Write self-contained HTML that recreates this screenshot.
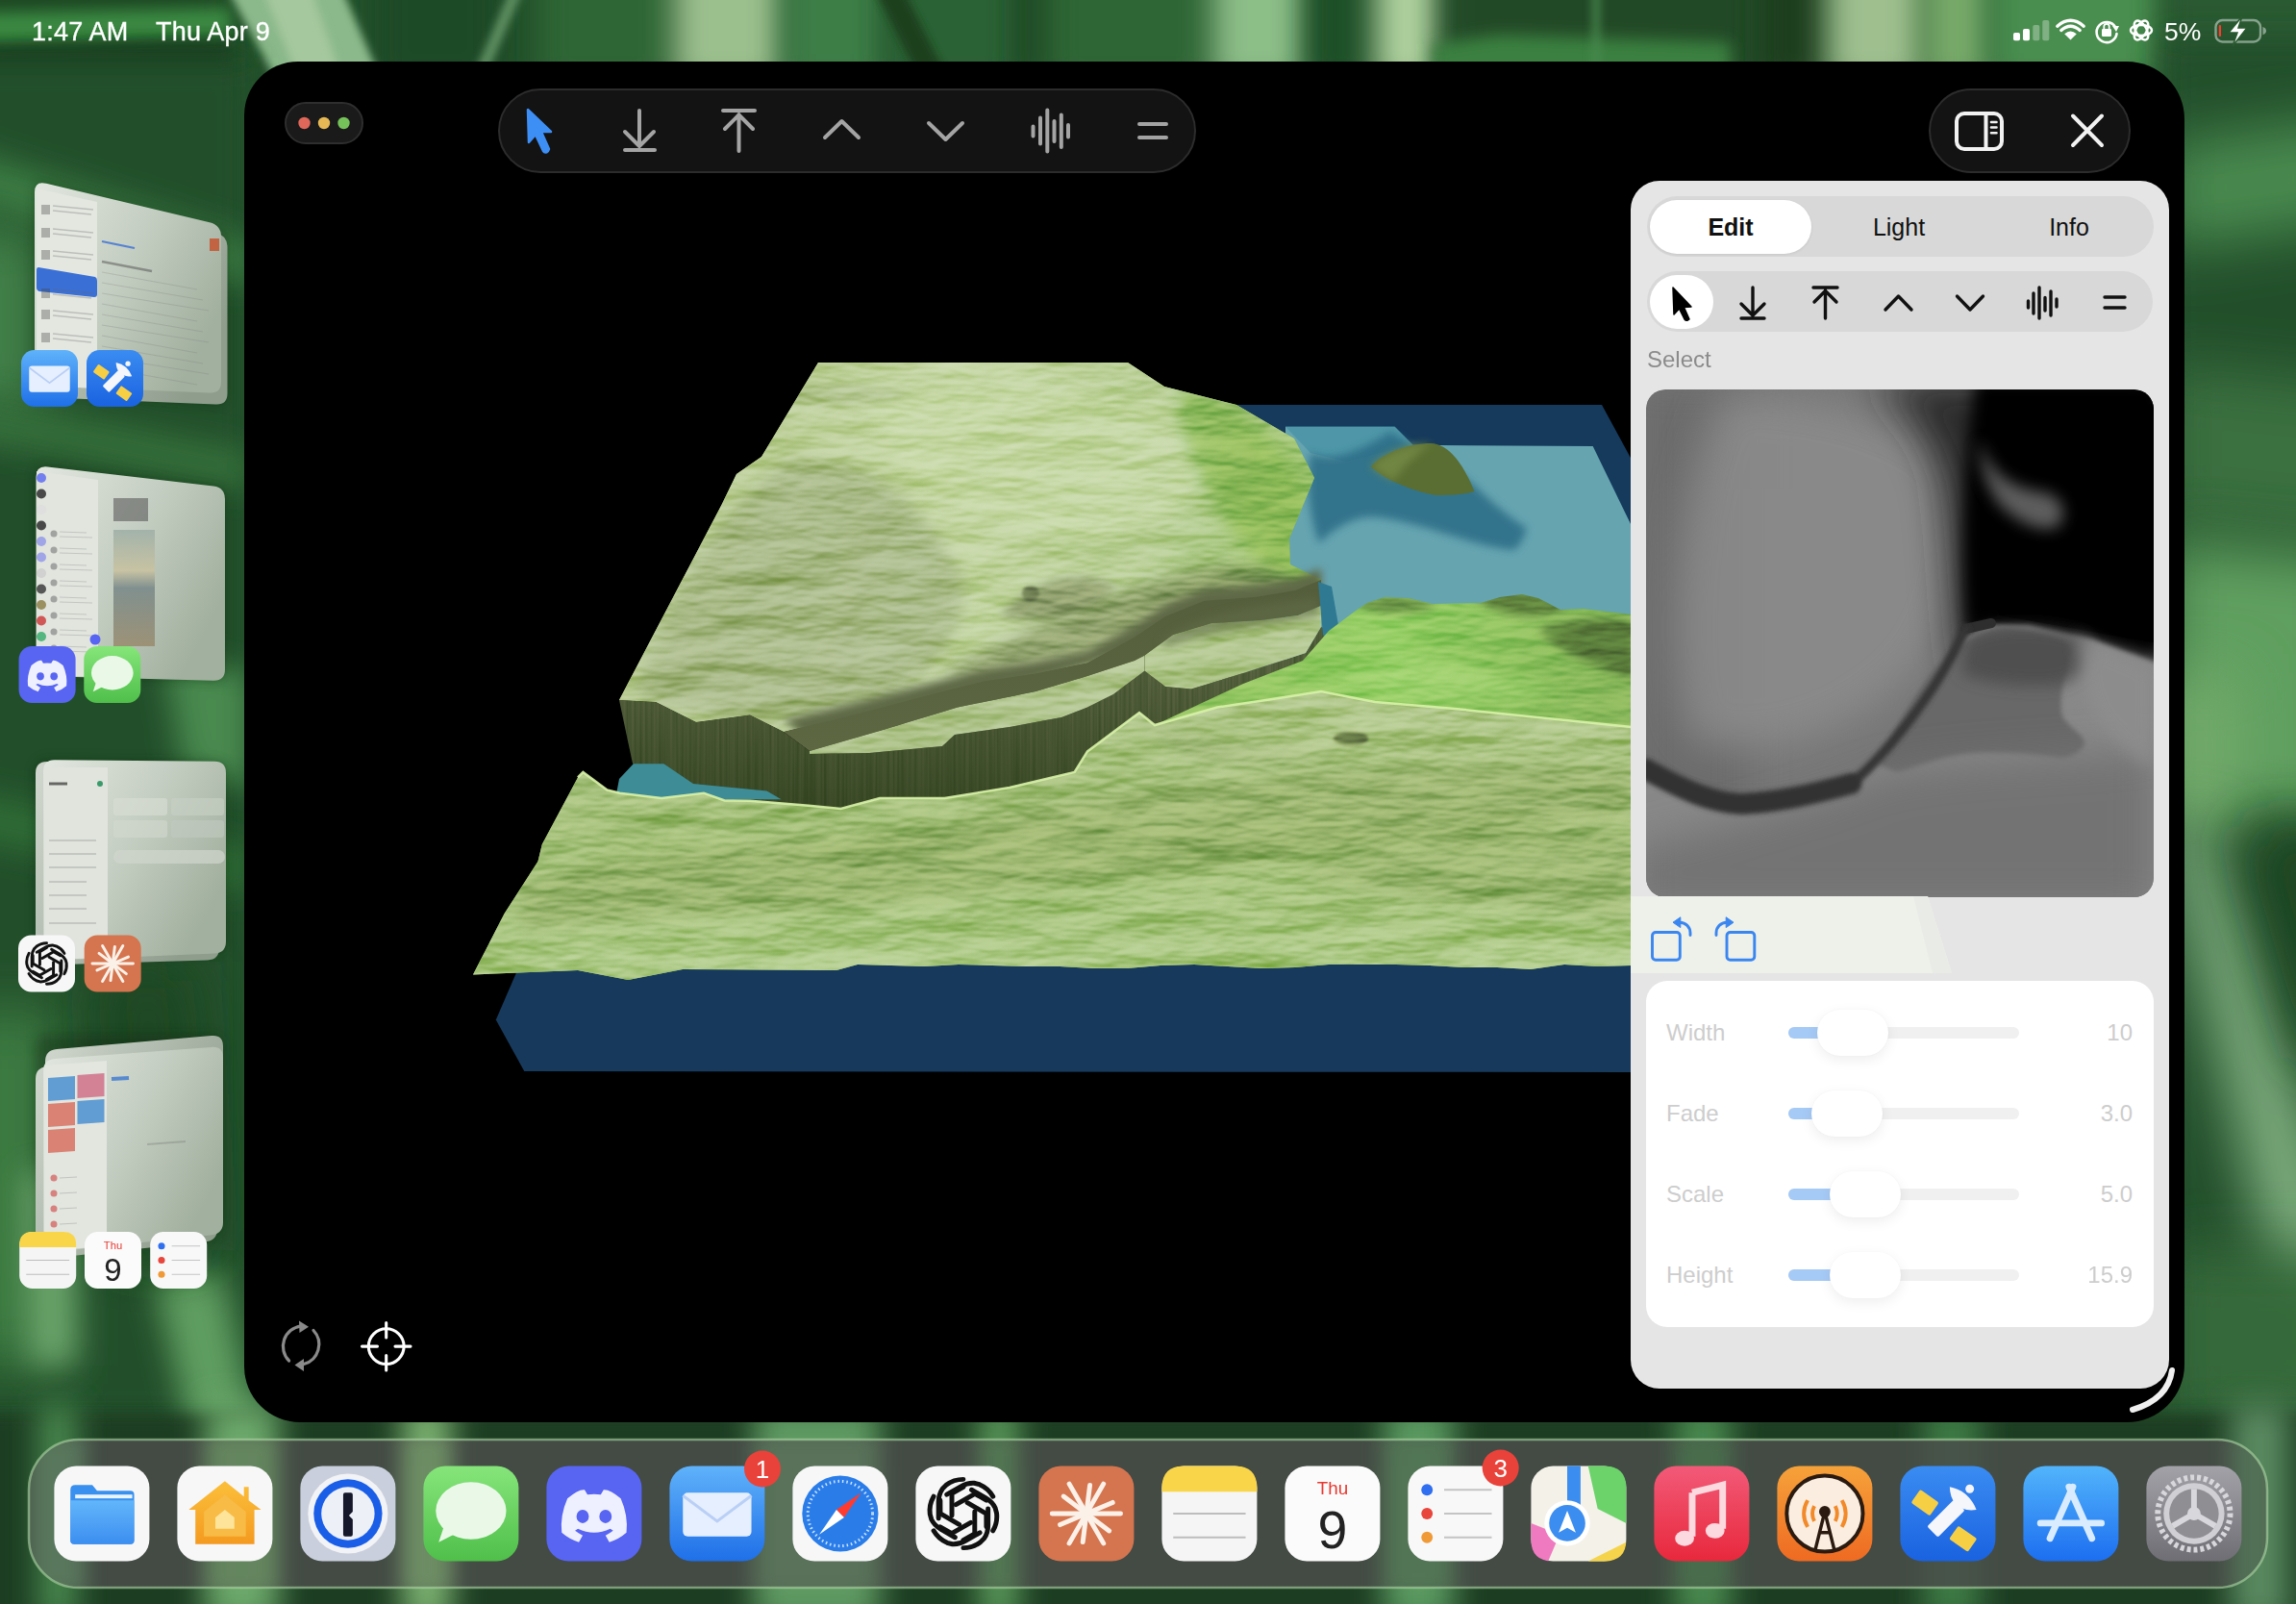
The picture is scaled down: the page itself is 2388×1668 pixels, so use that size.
<!DOCTYPE html>
<html><head><meta charset="utf-8">
<style>
*{margin:0;padding:0;box-sizing:border-box}
html,body{width:2388px;height:1668px;overflow:hidden;background:#1e4526;font-family:"Liberation Sans",sans-serif}
.abs{position:absolute}
#wall{position:absolute;left:0;top:0;width:2388px;height:1668px}
#win{position:absolute;left:254px;top:64px;width:2018px;height:1415px;background:#000;border-radius:56px 60px 60px 58px;overflow:hidden}
.pill{position:absolute;background:#131313;border:2px solid #2a2a2a;border-radius:44px}
.status{position:absolute;color:#fff;font-size:27px;top:18px;letter-spacing:0.2px;-webkit-text-stroke:0.35px #fff}
.seg{top:20px;height:56px;line-height:56px;text-align:center;font-size:25px;color:#111}
.slab{font-size:24px;line-height:30px;color:#cdcdcd}
#panel{position:absolute;left:1696px;top:188px;width:560px;height:1256px;background:#e5e5e5;border-radius:30px}
</style></head><body>
<!--WALL-->
<svg id="wall" width="2388" height="1668" viewBox="0 0 2388 1668">
<defs><filter id="b30" filterUnits="userSpaceOnUse" x="-200" y="-200" width="2788" height="2068"><feGaussianBlur stdDeviation="30"/></filter><filter id="b16" filterUnits="userSpaceOnUse" x="-200" y="-200" width="2788" height="2068"><feGaussianBlur stdDeviation="16"/></filter><filter id="b8" filterUnits="userSpaceOnUse" x="-200" y="-200" width="2788" height="2068"><feGaussianBlur stdDeviation="8"/></filter><filter id="b4" filterUnits="userSpaceOnUse" x="-200" y="-200" width="2788" height="2068"><feGaussianBlur stdDeviation="4"/></filter></defs>
<rect width="2388" height="1668" fill="#22502a"/>
<rect x="-50" y="-40" width="290" height="130" fill="#1c4621" filter="url(#b16)"/>
<rect x="390" y="-40" width="130" height="130" fill="#1e4a25" filter="url(#b16)"/>
<rect x="560" y="-40" width="140" height="130" fill="#2d6636" filter="url(#b16)"/>
<rect x="700" y="-40" width="115" height="130" fill="#9cbf8e" filter="url(#b16)"/>
<rect x="815" y="-40" width="105" height="130" fill="#3c7e46" filter="url(#b16)"/>
<rect x="920" y="-40" width="140" height="130" fill="#2c6234" filter="url(#b16)"/>
<rect x="1060" y="-40" width="30" height="130" fill="#1d4621" filter="url(#b16)"/>
<rect x="1090" y="-40" width="170" height="130" fill="#2d6636" filter="url(#b16)"/>
<rect x="1260" y="-40" width="100" height="130" fill="#8cbe88" filter="url(#b16)"/>
<rect x="1360" y="-40" width="70" height="130" fill="#1f5026" filter="url(#b16)"/>
<rect x="1430" y="-40" width="70" height="130" fill="#aed09e" filter="url(#b16)"/>
<rect x="1500" y="-40" width="330" height="130" fill="#214a27" filter="url(#b16)"/>
<rect x="1830" y="-40" width="70" height="130" fill="#1b3d1f" filter="url(#b16)"/>
<rect x="1900" y="-40" width="100" height="130" fill="#9fbf8f" filter="url(#b16)"/>
<rect x="2000" y="-40" width="70" height="130" fill="#78aa6a" filter="url(#b16)"/>
<rect x="2070" y="-40" width="180" height="130" fill="#4a8e50" filter="url(#b16)"/>
<rect x="2250" y="-40" width="200" height="130" fill="#2a5a30" filter="url(#b16)"/>
<polygon points="-50,14 240,8 240,40 -50,48" fill="#3a8a42" filter="url(#b8)"/>
<polygon points="-50,50 240,42 240,90 -50,90" fill="#163a1c" filter="url(#b8)"/>
<polygon points="232,-20 352,-20 395,80 285,80" fill="#8bb98b" filter="url(#b4)"/>
<polygon points="270,-20 320,-20 355,80 310,80" fill="#a6c89e" filter="url(#b4)"/>
<polygon points="535,-20 548,-20 505,80 492,80" fill="#5f9062" filter="url(#b4)"/>
<polygon points="905,-20 935,-20 985,80 955,80" fill="#1a401f" filter="url(#b4)"/>
<polygon points="1490,46 1560,36 1800,44 1800,90 1490,90" fill="#3a8040" filter="url(#b8)"/>
<rect x="1655" y="-20" width="10" height="100" fill="#4a8a50" filter="url(#b4)" opacity="0.7"/>

<rect x="2250" y="40" width="200" height="1460" fill="#22502a" filter="url(#b16)"/>
<polygon points="2250,150 2450,120 2450,230 2250,260" fill="#4a8a50" filter="url(#b30)"/>
<polygon points="2250,380 2450,400 2450,560 2250,540" fill="#3a7040" filter="url(#b30)"/>
<polygon points="2250,560 2450,580 2450,860 2250,840" fill="#5f9f5f" filter="url(#b30)"/>
<polygon points="2250,700 2330,700 2330,860 2250,860" fill="#72aa6a" filter="url(#b30)"/>
<polygon points="2250,860 2300,860 2450,1320 2450,1420 2390,1420" fill="#86b686" filter="url(#b30)"/>
<polygon points="2330,860 2450,860 2450,1100 2400,1100" fill="#1e4424" filter="url(#b30)"/>
<polygon points="2250,1300 2450,1300 2450,1480 2250,1480" fill="#35693b" filter="url(#b30)"/>
<polygon points="-50,60 260,60 260,1480 -50,1480" fill="#21502a" filter="url(#b16)"/>
<polygon points="-50,150 260,250 260,300 -50,200" fill="#3a7a42" filter="url(#b16)"/>
<polygon points="-50,230 40,240 40,430 -50,430" fill="#45854b" filter="url(#b30)"/>
<polygon points="-50,410 260,470 260,510 -50,450" fill="#356f3b" filter="url(#b16)"/>
<polygon points="170,680 260,700 260,820 190,800" fill="#4a8a50" filter="url(#b16)"/>
<polygon points="-50,820 260,880 260,930 -50,870" fill="#2f6a36" filter="url(#b16)"/>
<polygon points="-50,1050 60,1050 60,1420 -50,1420" fill="#3c7c42" filter="url(#b30)"/>
<polygon points="25,1220 75,1220 80,1420 30,1420" fill="#6aa46a" filter="url(#b16)"/>
<polygon points="160,1330 230,1320 270,1500 200,1500" fill="#5f9e60" filter="url(#b16)"/>
<polygon points="100,1000 200,1000 220,1300 120,1300" fill="#1d4622" filter="url(#b30)"/>
<rect x="-50" y="1470" width="2500" height="250" fill="#1c3c23" filter="url(#b8)"/>
<rect x="40" y="1460" width="40" height="230" fill="#4a8a50" filter="url(#b16)"/>
<rect x="213" y="1460" width="77" height="230" fill="#6ca86a" filter="url(#b16)"/>
<rect x="418" y="1460" width="52" height="230" fill="#7ab070" filter="url(#b16)"/>
<rect x="784" y="1460" width="131" height="230" fill="#5f9a62" filter="url(#b16)"/>
<rect x="1019" y="1460" width="40" height="230" fill="#5b9b5c" filter="url(#b16)"/>
<rect x="1439" y="1460" width="73" height="230" fill="#5a9a60" filter="url(#b16)"/>
<rect x="1742" y="1460" width="58" height="230" fill="#4a8a50" filter="url(#b16)"/>
<rect x="2000" y="1460" width="60" height="230" fill="#3d7a45" filter="url(#b16)"/>
<rect x="2320" y="1460" width="60" height="230" fill="#5a8a60" filter="url(#b16)"/>
</svg>

<!--STATUS-->
<div class="status" style="left:33px">1:47 AM</div>
<div class="status" style="left:162px">Thu Apr 9</div>

<svg class="abs" style="left:2080px;top:10px" width="300" height="45" viewBox="2080 10 300 45">
<rect x="2094" y="34" width="7" height="8.2" rx="1.8" fill="#fff"/>
<rect x="2104" y="30" width="7" height="12.2" rx="1.8" fill="#fff"/>
<rect x="2114.3" y="26" width="7" height="16.2" rx="1.8" fill="#fff" opacity="0.3"/>
<rect x="2124.3" y="21" width="7" height="21.2" rx="1.8" fill="#fff" opacity="0.3"/>
<path d="M2153.5,41.5 L2147.2,35.2 Q2153.5,30 2159.8,35.2 Z" fill="#fff"/>
<path d="M2143.8,31.5 Q2153.5,23 2163.2,31.5" fill="none" stroke="#fff" stroke-width="3.4" stroke-linecap="round"/>
<path d="M2139.8,27.2 Q2153.5,15.5 2167.2,27.2" fill="none" stroke="#fff" stroke-width="3.4" stroke-linecap="round"/>
<path d="M2200,28 A10.5,10.5 0 1 0 2201.5,35" fill="none" stroke="#fff" stroke-width="2.6" stroke-linecap="round"/>
<polygon points="2197,27 2204,27 2201,33" fill="#fff"/>
<rect x="2186" y="30" width="10" height="8" rx="1.2" fill="#fff"/>
<path d="M2188.3,30 L2188.3,27.5 A2.7,2.7 0 0 1 2193.7,27.5 L2193.7,30" fill="none" stroke="#fff" stroke-width="1.8"/>
<g fill="none" stroke="#fff" stroke-width="2.4">
<ellipse cx="2227" cy="31.5" rx="11" ry="5.5" transform="rotate(0 2227 31.5)"/>
<ellipse cx="2227" cy="31.5" rx="11" ry="5.5" transform="rotate(60 2227 31.5)"/>
<ellipse cx="2227" cy="31.5" rx="11" ry="5.5" transform="rotate(120 2227 31.5)"/>
</g>
<text x="2251" y="41.5" font-family="Liberation Sans" font-size="26.5" fill="#fff">5%</text>
<rect x="2304.5" y="21" width="46.5" height="22.5" rx="7" fill="none" stroke="#fff" stroke-opacity="0.45" stroke-width="2.4"/>
<path d="M2353.5,28 Q2357,29 2357,32 Q2357,35 2353.5,36 Z" fill="#fff" fill-opacity="0.45"/>
<rect x="2307.8" y="26" width="2.2" height="12" rx="1" fill="#ff3b30"/>
<path d="M2332,17 L2318,34 L2327,34 L2322,48 L2337,29 L2328,29 Z" fill="#fff" stroke="#2a5a30" stroke-width="1.5"/>
</svg>
<!--STAGE-->
<svg class="abs" style="left:0;top:0" width="260" height="1400" viewBox="0 0 260 1400">
<defs>
<linearGradient id="smg" x1="0" y1="0" x2="1" y2="0.6"><stop offset="0" stop-color="#e2e7df"/><stop offset="0.5" stop-color="#c6cfc3"/><stop offset="1" stop-color="#a2b09f"/></linearGradient>
<linearGradient id="smg2" x1="0" y1="0" x2="1" y2="0.6"><stop offset="0" stop-color="#d2d8cf"/><stop offset="1" stop-color="#8f9d8d"/></linearGradient>
<filter id="smb" x="-30%" y="-30%" width="160%" height="160%"><feGaussianBlur stdDeviation="6"/></filter>
<filter id="smt" x="-10%" y="-10%" width="120%" height="120%"><feGaussianBlur stdDeviation="0.6"/></filter>
</defs>
<path d="M48,191.12 L224,236.88 Q236,240 236,252 L236,409 Q236,421 224,420.04 L48,405.96 Q36,405 36,393 L36,200 Q36,188 48,191.12 Z" fill="#0a200e" opacity="0.35" filter="url(#smb)"/>
<path d="M49,485.4010152284264 L222,505.5989847715736 Q234,507 234,519 L234,696 Q234,708 222,707.6954314720812 L49,703.3045685279188 Q37,703 37,691 L37,496 Q37,484 49,485.4010152284264 Z" fill="#0a200e" opacity="0.35" filter="url(#smb)"/>
<path d="M49,790.1212121212121 L223,791.8787878787879 Q235,792 235,804 L235,979 Q235,991 223,991.4848484848485 L49,998.5151515151515 Q37,999 37,987 L37,802 Q37,790 49,790.1212121212121 Z" fill="#0a200e" opacity="0.35" filter="url(#smb)"/>
<path d="M49,1076.0 L220,1076.0 Q232,1076 232,1088 L232,1271 Q232,1283 220,1284.2307692307693 L49,1301.7692307692307 Q37,1303 37,1291 L37,1088 Q37,1076 49,1076.0 Z" fill="#0a200e" opacity="0.35" filter="url(#smb)"/>
<path d="M52,202.74809160305344 L224.5,242.25190839694656 Q236.5,245 236.5,257 L236.5,409 Q236.5,421 224.5,420.51145038167937 L52,413.48854961832063 Q40,413 40,401 L40,212 Q40,200 52,202.74809160305344 Z" fill="url(#smg2)" />
<path d="M48,190.84536082474227 L218,231.15463917525773 Q230,234 230,246 L230,397 Q230,409 218,408.50515463917526 L48,401.49484536082474 Q36,401 36,389 L36,200 Q36,188 48,190.84536082474227 Z" fill="url(#smg)" />
<polygon points="38,196 101,210 101,404 38,401" fill="#e3e7e0"/>
<path d="M40,278 L99,288 Q101,289 101,292 L101,306 Q101,309 98,309 L41,303 Q38,302 38,299 L38,281 Q38,278 40,278 Z" fill="#3a6fd6"/>
<rect x="43" y="213" width="9" height="10" fill="#444" opacity="0.35"/>
<path d="M55,214 L97,218 M55,219 L95,223" stroke="#666" stroke-width="1.3" opacity="0.3"/>
<rect x="43" y="237" width="9" height="10" fill="#444" opacity="0.35"/>
<path d="M55,238 L97,242 M55,243 L95,247" stroke="#666" stroke-width="1.3" opacity="0.3"/>
<rect x="43" y="260" width="9" height="10" fill="#444" opacity="0.35"/>
<path d="M55,261 L97,265 M55,266 L95,270" stroke="#666" stroke-width="1.3" opacity="0.3"/>
<rect x="43" y="300" width="9" height="10" fill="#444" opacity="0.35"/>
<path d="M55,301 L97,305 M55,306 L95,310" stroke="#666" stroke-width="1.3" opacity="0.3"/>
<rect x="43" y="322" width="9" height="10" fill="#444" opacity="0.35"/>
<path d="M55,323 L97,327 M55,328 L95,332" stroke="#666" stroke-width="1.3" opacity="0.3"/>
<rect x="43" y="346" width="9" height="10" fill="#444" opacity="0.35"/>
<path d="M55,347 L97,351 M55,352 L95,356" stroke="#666" stroke-width="1.3" opacity="0.3"/>
<path d="M106,251 L140,258" stroke="#3a6fd6" stroke-width="2.2" opacity="0.8"/>
<path d="M106,272 L158,282" stroke="#444" stroke-width="2.5" opacity="0.45"/>
<rect x="218" y="248" width="10" height="13" fill="#c65530" opacity="0.85"/>
<path d="M106,283 L205,301" stroke="#777" stroke-width="1.2" opacity="0.25"/>
<path d="M106,294 L211,312" stroke="#777" stroke-width="1.2" opacity="0.25"/>
<path d="M106,305 L217,323" stroke="#777" stroke-width="1.2" opacity="0.25"/>
<path d="M106,316 L205,334" stroke="#777" stroke-width="1.2" opacity="0.25"/>
<path d="M106,327 L211,345" stroke="#777" stroke-width="1.2" opacity="0.25"/>
<path d="M106,338 L217,356" stroke="#777" stroke-width="1.2" opacity="0.25"/>
<path d="M106,349 L205,367" stroke="#777" stroke-width="1.2" opacity="0.25"/>
<path d="M106,360 L211,378" stroke="#777" stroke-width="1.2" opacity="0.25"/>
<path d="M106,371 L217,389" stroke="#777" stroke-width="1.2" opacity="0.25"/>
<path d="M106,382 L205,400" stroke="#777" stroke-width="1.2" opacity="0.25"/>
<path d="M49.5,485.40458015267177 L222,505.59541984732823 Q234,507 234,519 L234,696 Q234,708 222,707.6946564885496 L49.5,703.3053435114504 Q37.5,703 37.5,691 L37.5,496 Q37.5,484 49.5,485.40458015267177 Z" fill="url(#smg)" />
<polygon points="38,490 102,499 102,704 38,702" fill="#e1e5de"/>
<circle cx="43" cy="497.0" r="5" fill="#5865f2" opacity="0.8"/>
<circle cx="43" cy="513.5" r="5" fill="#222" opacity="0.8"/>
<circle cx="43" cy="530.0" r="5" fill="#ddd" opacity="0.8"/>
<circle cx="43" cy="546.5" r="5" fill="#222" opacity="0.8"/>
<circle cx="43" cy="563.0" r="5" fill="#8f95e8" opacity="0.8"/>
<circle cx="43" cy="579.5" r="5" fill="#8f95e8" opacity="0.8"/>
<circle cx="43" cy="596.0" r="5" fill="#ccc" opacity="0.8"/>
<circle cx="43" cy="612.5" r="5" fill="#333" opacity="0.8"/>
<circle cx="43" cy="629.0" r="5" fill="#8a7a40" opacity="0.8"/>
<circle cx="43" cy="645.5" r="5" fill="#c33" opacity="0.8"/>
<circle cx="43" cy="662.0" r="5" fill="#3a6" opacity="0.8"/>
<circle cx="56" cy="555" r="3.5" fill="#777" opacity="0.6"/><path d="M62,553 L90,554 M62,558 L96,559" stroke="#777" stroke-width="1.2" opacity="0.28"/>
<circle cx="56" cy="572" r="3.5" fill="#777" opacity="0.6"/><path d="M62,570 L90,571 M62,575 L96,576" stroke="#777" stroke-width="1.2" opacity="0.28"/>
<circle cx="56" cy="589" r="3.5" fill="#777" opacity="0.6"/><path d="M62,587 L90,588 M62,592 L96,593" stroke="#777" stroke-width="1.2" opacity="0.28"/>
<circle cx="56" cy="606" r="3.5" fill="#777" opacity="0.6"/><path d="M62,604 L90,605 M62,609 L96,610" stroke="#777" stroke-width="1.2" opacity="0.28"/>
<circle cx="56" cy="623" r="3.5" fill="#777" opacity="0.6"/><path d="M62,621 L90,622 M62,626 L96,627" stroke="#777" stroke-width="1.2" opacity="0.28"/>
<circle cx="56" cy="640" r="3.5" fill="#777" opacity="0.6"/><path d="M62,638 L90,639 M62,643 L96,644" stroke="#777" stroke-width="1.2" opacity="0.28"/>
<circle cx="56" cy="657" r="3.5" fill="#777" opacity="0.6"/><path d="M62,655 L90,656 M62,660 L96,661" stroke="#777" stroke-width="1.2" opacity="0.28"/>
<circle cx="56" cy="674" r="3.5" fill="#777" opacity="0.6"/><path d="M62,672 L90,673 M62,677 L96,678" stroke="#777" stroke-width="1.2" opacity="0.28"/>
<rect x="118" y="518" width="36" height="24" fill="#5a5a5a" opacity="0.6"/>
<defs><linearGradient id="beach" x1="0" y1="0" x2="0" y2="1"><stop offset="0" stop-color="#9fb0a8"/><stop offset="0.35" stop-color="#c8c2a0"/><stop offset="0.5" stop-color="#7a8a8a"/><stop offset="1" stop-color="#9a8d70"/></linearGradient></defs>
<rect x="118" y="551" width="43" height="121" fill="url(#beach)" opacity="0.9"/>
<circle cx="99" cy="665" r="5.5" fill="#5865f2"/>
<path d="M49,792.0 L216,792.0 Q228,792 228,804 L228,986 Q228,998 216,998.3769633507853 L49,1003.6230366492147 Q37,1004 37,992 L37,804 Q37,792 49,792.0 Z" fill="url(#smg2)" />
<path d="M57,790.1263157894737 L223,791.8736842105263 Q235,792 235,804 L235,979 Q235,991 223,991.5052631578948 L57,998.4947368421052 Q45,999 45,987 L45,802 Q45,790 57,790.1263157894737 Z" fill="url(#smg)" />
<polygon points="46,798 112,798 112,996 46,998" fill="#e0e4dd"/>
<path d="M51,815 L70,815" stroke="#333" stroke-width="3" opacity="0.7"/><circle cx="104" cy="815" r="3" fill="#3a9a6a"/>
<path d="M51,874 L100,874" stroke="#666" stroke-width="1.3" opacity="0.3"/>
<path d="M51,888 L100,888" stroke="#666" stroke-width="1.3" opacity="0.3"/>
<path d="M51,902 L100,902" stroke="#666" stroke-width="1.3" opacity="0.3"/>
<path d="M51,917 L90,917" stroke="#666" stroke-width="1.3" opacity="0.3"/>
<path d="M51,931 L90,931" stroke="#666" stroke-width="1.3" opacity="0.3"/>
<path d="M51,945 L90,945" stroke="#666" stroke-width="1.3" opacity="0.3"/>
<path d="M51,960 L100,960" stroke="#666" stroke-width="1.3" opacity="0.3"/>
<rect x="118" y="830" width="56" height="18" rx="3" fill="#d8ddd4" opacity="0.6"/><rect x="178" y="830" width="55" height="18" rx="3" fill="#c8d0c5" opacity="0.6"/>
<rect x="118" y="853" width="56" height="18" rx="3" fill="#d2d8cf" opacity="0.6"/><rect x="178" y="853" width="55" height="18" rx="3" fill="#c2cac0" opacity="0.6"/>
<rect x="118" y="884" width="116" height="14" rx="7" fill="#d0d6cd" opacity="0.7"/>
<path d="M59,1090.9621621621623 L220,1077.0378378378377 Q232,1076 232,1088 L232,1258 Q232,1270 220,1271.2972972972973 L59,1288.7027027027027 Q47,1290 47,1278 L47,1104 Q47,1092 59,1090.9621621621623 Z" fill="url(#smg2)" />
<path d="M49,1109.2380952380952 L214,1098.7619047619048 Q226,1098 226,1110 L226,1278 Q226,1290 214,1291.2698412698412 L49,1308.7301587301588 Q37,1310 37,1298 L37,1122 Q37,1110 49,1109.2380952380952 Z" fill="url(#smg2)" />
<path d="M57,1101.1016042780748 L220,1088.8983957219252 Q232,1088 232,1100 L232,1271 Q232,1283 220,1284.283422459893 L57,1301.716577540107 Q45,1303 45,1291 L45,1114 Q45,1102 57,1101.1016042780748 Z" fill="url(#smg)" />
<polygon points="46,1108 111,1103 111,1296 46,1301" fill="#e2e6df"/>
<polygon points="50,1121 78,1119 78,1143 50,1145" fill="#4a8fd0" opacity="0.85"/>
<polygon points="80.5,1118 108.5,1116 108.5,1140 80.5,1142" fill="#d0708a" opacity="0.85"/>
<polygon points="50,1148 78,1146 78,1170 50,1172" fill="#d87060" opacity="0.85"/>
<polygon points="80.5,1145 108.5,1143 108.5,1167 80.5,1169" fill="#4a8fd0" opacity="0.85"/>
<polygon points="50,1175 78,1173 78,1197 50,1199" fill="#d87060" opacity="0.85"/>
<path d="M116,1122 L134,1121" stroke="#3a78d0" stroke-width="4" opacity="0.8"/>
<path d="M153,1190 L193,1187" stroke="#777" stroke-width="2" opacity="0.35"/>
<circle cx="56" cy="1225" r="3.5" fill="#d04040" opacity="0.6"/><path d="M62,1225 L80,1224" stroke="#777" stroke-width="1.2" opacity="0.3"/>
<circle cx="56" cy="1241" r="3.5" fill="#d04040" opacity="0.6"/><path d="M62,1241 L80,1240" stroke="#777" stroke-width="1.2" opacity="0.3"/>
<circle cx="56" cy="1257" r="3.5" fill="#d04040" opacity="0.6"/><path d="M62,1257 L80,1256" stroke="#777" stroke-width="1.2" opacity="0.3"/>
<circle cx="56" cy="1273" r="3.5" fill="#d04040" opacity="0.6"/><path d="M62,1273 L80,1272" stroke="#777" stroke-width="1.2" opacity="0.3"/>
<!--SMICONS-->
<g transform="translate(22,364) scale(0.5900)"><rect width="100" height="100" rx="23" fill="url(#igMail)"/><rect x="14" y="28" width="72" height="46" rx="5" fill="#e6efff"/><path d="M14,31 L50,58 L86,31" fill="none" stroke="#b9cff5" stroke-width="3"/></g>
<g transform="translate(90,364) scale(0.5900)"><rect width="100" height="100" rx="23" fill="url(#igSat)"/><rect x="14" y="30" width="24" height="17" rx="2" transform="rotate(35 26 38.5)" fill="#f6cf45"/><rect x="54" y="68" width="24" height="17" rx="2" transform="rotate(35 66 76.5)" fill="#f6cf45"/><rect x="28" y="47" width="40" height="16" rx="2" transform="rotate(-45 48 55)" fill="#f4f6fb"/><path d="M52,22 Q72,26 80,46 Q66,48 58,40 Q52,32 52,22 Z" fill="#f4f6fb"/><circle cx="73" cy="24" r="4.5" fill="#f4f6fb"/></g>
<g transform="translate(19.6,672) scale(0.5900)"><rect width="100" height="100" rx="23" fill="#5865f2"/><path d="M22,34 Q34,24 40,25 L43,30 Q50,29 57,30 L60,25 Q66,24 78,34 Q86,52 84,70 Q76,77 66,80 L62,73 Q66,71 70,68 L67,66 Q50,74 33,66 L30,68 Q34,71 38,73 L34,80 Q24,77 16,70 Q14,52 22,34 Z" fill="#eef0ff"/><ellipse cx="38" cy="53" rx="6.5" ry="7" fill="#5865f2"/><ellipse cx="62" cy="53" rx="6.5" ry="7" fill="#5865f2"/></g>
<g transform="translate(87.3,672) scale(0.5900)"><rect width="100" height="100" rx="23" fill="url(#igMsg)"/><ellipse cx="50" cy="47" rx="37" ry="30" fill="#eaf8e8"/><path d="M22,62 L16,80 L36,70 Z" fill="#eaf8e8"/></g>
<g transform="translate(19,972.5) scale(0.5900)"><rect width="100" height="100" rx="23" fill="#f7f7f8"/><g fill="none" stroke="#111" stroke-width="5"><path d="M50,22 L38,29 L38,52" transform="rotate(0 50 50)" stroke-linejoin="round" stroke-linecap="round"/><path d="M50,14 Q40,14 32,20 L28,24 Q24,30 24,38 L24,55" transform="rotate(0 50 50)" stroke-linecap="round"/><path d="M50,22 L38,29 L38,52" transform="rotate(60 50 50)" stroke-linejoin="round" stroke-linecap="round"/><path d="M50,14 Q40,14 32,20 L28,24 Q24,30 24,38 L24,55" transform="rotate(60 50 50)" stroke-linecap="round"/><path d="M50,22 L38,29 L38,52" transform="rotate(120 50 50)" stroke-linejoin="round" stroke-linecap="round"/><path d="M50,14 Q40,14 32,20 L28,24 Q24,30 24,38 L24,55" transform="rotate(120 50 50)" stroke-linecap="round"/><path d="M50,22 L38,29 L38,52" transform="rotate(180 50 50)" stroke-linejoin="round" stroke-linecap="round"/><path d="M50,14 Q40,14 32,20 L28,24 Q24,30 24,38 L24,55" transform="rotate(180 50 50)" stroke-linecap="round"/><path d="M50,22 L38,29 L38,52" transform="rotate(240 50 50)" stroke-linejoin="round" stroke-linecap="round"/><path d="M50,14 Q40,14 32,20 L28,24 Q24,30 24,38 L24,55" transform="rotate(240 50 50)" stroke-linecap="round"/><path d="M50,22 L38,29 L38,52" transform="rotate(300 50 50)" stroke-linejoin="round" stroke-linecap="round"/><path d="M50,14 Q40,14 32,20 L28,24 Q24,30 24,38 L24,55" transform="rotate(300 50 50)" stroke-linecap="round"/></g></g>
<g transform="translate(87.7,972.5) scale(0.5900)"><rect width="100" height="100" rx="23" fill="#d4754f"/><g stroke="#fbf1e8" stroke-width="5" stroke-linecap="round"><line x1="50" y1="50" x2="86.0" y2="50.0"/><line x1="50" y1="50" x2="74.0" y2="68.1"/><line x1="50" y1="50" x2="68.0" y2="81.2"/><line x1="50" y1="50" x2="46.3" y2="79.8"/><line x1="50" y1="50" x2="32.0" y2="81.2"/><line x1="50" y1="50" x2="22.4" y2="61.7"/><line x1="50" y1="50" x2="14.0" y2="50.0"/><line x1="50" y1="50" x2="26.0" y2="31.9"/><line x1="50" y1="50" x2="32.0" y2="18.8"/><line x1="50" y1="50" x2="53.7" y2="20.2"/><line x1="50" y1="50" x2="68.0" y2="18.8"/><line x1="50" y1="50" x2="77.6" y2="38.3"/></g></g>
<g transform="translate(20.2,1281) scale(0.5900)"><rect width="100" height="100" rx="23" fill="#f5f5f5"/><path d="M0,23 Q0,0 23,0 L77,0 Q100,0 100,23 L100,27 L0,27 Z" fill="#f9d54a"/><path d="M12,50 L88,50 M12,75 L88,75" stroke="#bdbdbd" stroke-width="2"/></g>
<g transform="translate(88,1281) scale(0.5900)"><rect width="100" height="100" rx="23" fill="#fbfbfb"/><text x="50" y="30" text-anchor="middle" font-family="Liberation Sans" font-size="19" fill="#e8382f">Thu</text><text x="50" y="86" text-anchor="middle" font-family="Liberation Sans" font-size="56" fill="#222">9</text></g>
<g transform="translate(156.2,1281) scale(0.5900)"><rect width="100" height="100" rx="23" fill="#f8f8f8"/><circle cx="20" cy="25" r="6" fill="#2f6ff0"/><circle cx="20" cy="50" r="6" fill="#e8453c"/><circle cx="20" cy="75" r="6" fill="#f09a37"/><path d="M38,25 L88,25 M38,50 L88,50 M38,75 L88,75" stroke="#c4c4c4" stroke-width="2"/></g>
<!--/SMICONS-->
</svg>
<!--WINDOW-->
<div id="win"></div>


<!--TERRAIN-->
<svg class="abs" style="left:0;top:0" width="2388" height="1668" viewBox="0 0 2388 1668">
<defs>
<linearGradient id="gPlat" gradientUnits="userSpaceOnUse" x1="650" y1="400" x2="1380" y2="600">
<stop offset="0" stop-color="#adc383"/><stop offset="0.45" stop-color="#bdd197"/><stop offset="0.75" stop-color="#b2ca8c"/><stop offset="1" stop-color="#88b858"/>
</linearGradient>
<linearGradient id="gCliff" gradientUnits="userSpaceOnUse" x1="0" y1="700" x2="0" y2="840">
<stop offset="0" stop-color="#5a6442"/><stop offset="1" stop-color="#3d4b29"/>
</linearGradient>
<linearGradient id="gBand" gradientUnits="userSpaceOnUse" x1="0" y1="610" x2="0" y2="780">
<stop offset="0" stop-color="#555e3c"/><stop offset="1" stop-color="#5d6742"/>
</linearGradient>
<linearGradient id="gLow" gradientUnits="userSpaceOnUse" x1="0" y1="740" x2="0" y2="1010">
<stop offset="0" stop-color="#a6c07c"/><stop offset="0.5" stop-color="#98b86c"/><stop offset="1" stop-color="#a4c47a"/>
</linearGradient>
<linearGradient id="gRight" gradientUnits="userSpaceOnUse" x1="1200" y1="0" x2="1700" y2="0">
<stop offset="0" stop-color="#86bc58"/><stop offset="0.5" stop-color="#8ecb5e"/><stop offset="1" stop-color="#7fb054"/>
</linearGradient>
<linearGradient id="gWater" gradientUnits="userSpaceOnUse" x1="1330" y1="0" x2="1700" y2="0">
<stop offset="0" stop-color="#2f7a92"/><stop offset="0.35" stop-color="#4a90a5"/><stop offset="1" stop-color="#66a6b3"/>
</linearGradient>
<filter id="tb8" filterUnits="userSpaceOnUse" x="300" y="200" width="1600" height="1000"><feGaussianBlur stdDeviation="8"/></filter>
<filter id="tb4" filterUnits="userSpaceOnUse" x="300" y="200" width="1600" height="1000"><feGaussianBlur stdDeviation="4"/></filter>
<filter id="tb2" filterUnits="userSpaceOnUse" x="300" y="200" width="1600" height="1000"><feGaussianBlur stdDeviation="1.5"/></filter>
<filter id="noise" filterUnits="userSpaceOnUse" x="400" y="300" width="1400" height="800" color-interpolation-filters="sRGB">
<feTurbulence type="fractalNoise" baseFrequency="0.009 0.028" numOctaves="4" seed="11" result="t"/>
<feDiffuseLighting in="t" surfaceScale="8" diffuseConstant="0.75" lighting-color="#ffffff" result="l"><feDistantLight azimuth="250" elevation="50"/></feDiffuseLighting>
<feComposite in="l" in2="SourceAlpha" operator="in"/>
</filter>
<clipPath id="cPlat"><polygon points="644,728 751,524 766,493 792,475 851,377 1173,377 1211,402 1286,421 1346,456 1367,497 1341,560 1342,587 1374,603 1374,603 1347,614 1306.6,620.8 1252.6,624.8 1212,641 1180,662.6 1131,689.6 1077,700.4 1023,708.5 969,722 888,743.6 815,761 780,743.6 724,751 682,730"/></clipPath>
<clipPath id="cLow"><polygon points="492,1013.5 524.6,950 559.5,895.7 563.8,878 601,808.4 606.4,803 631.5,821.5 644.6,824.7 688,830 732,824.7 753.7,832.4 780,832.7 841,837.8 874.5,841 915,830 982.5,830 1050,819 1117.6,803 1131,781.4 1185,741 1201,754 1266,735.5 1320,727.4 1374,719 1430,730 1513,737 1697,756 1697,1004 1662,1005 1627,1003 1592,1008 1557,1006 1522,1006 1487,1004 1452,1003 1417,1003 1382,1003 1347,1006 1312,1007 1277,1005 1242,1003 1207,1004 1172,1007 1137,1007 1102,1005 1067,1005 1032,1004 997,1003 962,1005 927,1004 892,1003 870,1009 710,1008 653.3,1019 601,1009"/></clipPath>
<filter id="stri" filterUnits="userSpaceOnUse" x="600" y="580" width="800" height="300" color-interpolation-filters="sRGB">
<feTurbulence type="fractalNoise" baseFrequency="0.35 0.004" numOctaves="2" seed="2" result="t"/>
<feColorMatrix in="t" type="matrix" values="0 0 0 0 0.1  0 0 0 0 0.2  0 0 0 0 0.05  0 0 0 1.6 -0.55"/>
<feComposite in2="SourceAlpha" operator="in"/>
</filter>
</defs>
<polygon points="1280,421 1666,421 1697,478 1697,700 1280,700" fill="#163a5c"/>
<polygon points="1337,443.8 1450.6,443.8 1469.5,462.8 1656.7,464 1697,547 1697,700 1337,700" fill="#66a4b0"/>
<path d="M1337,443.8 L1450.6,443.8 L1469.5,462.8 L1440,470 L1400,480 L1363,471 Z" fill="#4a93a6" opacity="0.8"/>
<path d="M1363,471 C1380,478 1400,478 1446,449 C1480,470 1520,490 1540,511 C1560,530 1580,545 1588,549 C1585,560 1580,568 1575,572 C1550,570 1520,560 1480,548 C1450,540 1430,536 1419,538 C1400,542 1385,552 1372,565 C1362,540 1358,500 1363,471 Z" fill="#2c6c86" opacity="0.85" filter="url(#tb4)"/>

<path d="M1425.7,485.3 C1440,470 1465,461 1488.5,461 C1510,462 1525,490 1533.5,511 C1520,515 1505,515 1493,515 C1465,510 1440,498 1425.7,485.3 Z" fill="#5a6e33"/>
<path d="M1425.7,485.3 C1440,470 1465,461 1488.5,461 C1470,475 1455,490 1450,500 C1440,495 1430,490 1425.7,485.3 Z" fill="#7a9048" opacity="0.7" filter="url(#tb4)"/>
<polygon points="644,728 751,524 766,493 792,475 851,377 1173,377 1211,402 1286,421 1346,456 1367,497 1341,560 1342,587 1374,603 1374,603 1347,614 1306.6,620.8 1252.6,624.8 1212,641 1180,662.6 1131,689.6 1077,700.4 1023,708.5 969,722 888,743.6 815,761 780,743.6 724,751 682,730" fill="url(#gPlat)"/>
<g clip-path="url(#cPlat)">
<rect x="600" y="360" width="800" height="440" fill="url(#gPlat)"/>
<path d="M660,720 C700,600 760,520 820,480 C900,470 960,520 1000,600 C1010,660 960,720 900,740 C820,760 720,750 660,720 Z" fill="#98aa74" opacity="0.7" filter="url(#tb8)"/>
<path d="M900,420 C1000,400 1150,400 1250,430 C1280,480 1250,540 1150,560 C1050,560 950,520 900,420 Z" fill="#c4d8a0" opacity="0.55" filter="url(#tb8)"/>
<path d="M1230,400 C1300,420 1380,480 1370,610 C1320,610 1280,560 1250,500 C1230,460 1220,430 1230,400 Z" fill="#7cb04a" opacity="0.75" filter="url(#tb8)"/>
<path d="M980,700 C1060,660 1160,610 1260,590 C1320,585 1350,600 1360,615 C1300,640 1200,665 1120,690 C1060,705 1010,715 980,700 Z" fill="#7b8c5a" opacity="0.7" filter="url(#tb8)"/>
<path d="M1040,640 C1080,600 1120,590 1160,610 C1130,640 1090,650 1040,640 Z" fill="#6d7a50" opacity="0.6" filter="url(#tb4)"/>
<ellipse cx="1072" cy="617" rx="9" ry="8" fill="#5d6a45" opacity="0.75" filter="url(#tb2)"/>
<path d="M780,410 C830,395 900,395 950,410 C900,425 830,425 780,410 Z" fill="#a8bb84" opacity="0.6" filter="url(#tb4)"/>
<polygon points="644,728 751,524 766,493 792,475 851,377 1173,377 1211,402 1286,421 1346,456 1367,497 1341,560 1342,587 1374,603 1374,603 1347,614 1306.6,620.8 1252.6,624.8 1212,641 1180,662.6 1131,689.6 1077,700.4 1023,708.5 969,722 888,743.6 815,761 780,743.6 724,751 682,730" fill="#fff" filter="url(#noise)" opacity="0.55" style="mix-blend-mode:overlay"/>
</g>
<polygon points="815,761 888,743.6 969,722 1023,708.5 1077,700.4 1131,689.6 1180,662.6 1212,641 1252.6,624.8 1306.6,620.8 1347,614 1374,603 1374,630 1350,640 1310,645 1260,648 1220,660 1190.5,681.5 1180,687 1131,703 1077,719 996,735.5 915,760 842,781" fill="#5e6946" filter="url(#tb4)" transform="translate(0,-12)"/>
<polygon points="815,761 888,743.6 969,722 1023,708.5 1077,700.4 1131,689.6 1180,662.6 1212,641 1252.6,624.8 1306.6,620.8 1347,614 1374,603 1374,630 1350,640 1310,645 1260,648 1220,660 1190.5,681.5 1180,687 1131,703 1077,719 996,735.5 915,760 842,781" fill="url(#gBand)"/>
<polygon points="644,728 682,730 724,751 780,743.6 815,761 842,781 842,784 904,783 980,776 993,764 1050,756 1104,746 1131,735.5 1158,722 1190.5,697.7 1212,714 1239,716.6 1293,700 1333.6,687 1358,679 1374,652 1382,655 1385,700 1374,719 1320,727.4 1266,735.5 1201,754 1185,741 1131,781.4 1117.6,803 1050,819 982.5,830 915,830 874.5,841 780,832.7 700,830 658,794" fill="url(#gCliff)"/>
<polygon points="644,728 682,730 724,751 780,743.6 815,761 842,781 842,784 904,783 980,776 993,764 1050,756 1104,746 1131,735.5 1158,722 1190.5,697.7 1212,714 1239,716.6 1293,700 1333.6,687 1358,679 1374,652 1382,655 1385,700 1374,719 1320,727.4 1266,735.5 1201,754 1185,741 1131,781.4 1117.6,803 1050,819 982.5,830 915,830 874.5,841 780,832.7 700,830 658,794" fill="#000" filter="url(#stri)" opacity="0.5"/>
<polygon points="842,781 915,760 996,735.5 1077,719 1131,703 1180,687 1190.5,681.5 1190.5,697.7 1158,722 1131,735.5 1104,746 1050,756 993,764 980,776 904,783 842,784" fill="#abc186"/>
<polygon points="842,781 915,760 996,735.5 1077,719 1131,703 1180,687 1190.5,681.5 1190.5,697.7 1158,722 1131,735.5 1104,746 1050,756 993,764 980,776 904,783 842,784" fill="#fff" filter="url(#noise)" opacity="0.5" style="mix-blend-mode:overlay"/>
<polygon points="1190.5,681.5 1220,660 1260,648 1310,645 1350,640 1374,630 1374,652 1358,679 1333.6,687 1293,700 1239,716.6 1212,714 1190.5,697.7" fill="#a9c182"/>
<polygon points="1190.5,681.5 1220,660 1260,648 1310,645 1350,640 1374,630 1374,652 1358,679 1333.6,687 1293,700 1239,716.6 1212,714 1190.5,697.7" fill="#fff" filter="url(#noise)" opacity="0.5" style="mix-blend-mode:overlay"/>
<path d="M1205,668 C1240,640 1300,630 1370,622 L1372,640 C1320,650 1260,655 1215,672 Z" fill="#616c46" opacity="0.6" filter="url(#tb4)"/>
<polygon points="658.8,794.2 690.4,794.2 721,815 797.5,822.6 812.6,831.3 640,831 644,810" fill="#3d8c96"/>
<polygon points="1371,605 1385,610 1392,650 1382,670 1376,660" fill="#2f7a92"/>
<clipPath id="cRight"><polygon points="1201,754 1293,711 1355,687 1382,656 1410,635 1422,627 1440,621 1465,622 1490,628 1540,627 1560,621 1583,618 1600,622 1623,634 1647,633 1697,639 1697,780 1201,780"/></clipPath>
<g clip-path="url(#cRight)">
<rect x="1200" y="600" width="500" height="190" fill="url(#gRight)"/>
<path d="M1400,700 C1450,680 1550,690 1620,720 C1560,735 1450,740 1400,700 Z" fill="#9ad06a" opacity="0.5" filter="url(#tb8)"/>
<path d="M1600,655 C1640,640 1690,645 1700,650 L1700,705 C1670,695 1630,685 1600,655 Z" fill="#4e6a30" opacity="0.85" filter="url(#tb4)"/>
<path d="M1530,618 C1560,612 1600,612 1630,632 C1600,645 1560,645 1530,618 Z" fill="#4f6b32" opacity="0.8" filter="url(#tb4)"/>
<path d="M1410,628 C1430,615 1470,615 1495,630 C1470,640 1430,642 1410,628 Z" fill="#5a7a3a" opacity="0.7" filter="url(#tb4)"/>
<polygon points="1201,754 1293,711 1355,687 1382,656 1410,635 1422,627 1440,621 1465,622 1490,628 1540,627 1560,621 1583,618 1600,622 1623,634 1647,633 1697,639 1697,780 1201,780" fill="#fff" filter="url(#noise)" opacity="0.45" style="mix-blend-mode:overlay"/>
</g>
<polygon points="542,1000 1697,995 1697,1115 545.3,1114 515.8,1060.5" fill="#173a5c"/>
<polygon points="492,1013.5 524.6,950 559.5,895.7 563.8,878 601,808.4 606.4,803 631.5,821.5 644.6,824.7 688,830 732,824.7 753.7,832.4 780,832.7 841,837.8 874.5,841 915,830 982.5,830 1050,819 1117.6,803 1131,781.4 1185,741 1201,754 1266,735.5 1320,727.4 1374,719 1430,730 1513,737 1697,756 1697,1004 1662,1005 1627,1003 1592,1008 1557,1006 1522,1006 1487,1004 1452,1003 1417,1003 1382,1003 1347,1006 1312,1007 1277,1005 1242,1003 1207,1004 1172,1007 1137,1007 1102,1005 1067,1005 1032,1004 997,1003 962,1005 927,1004 892,1003 870,1009 710,1008 653.3,1019 601,1009" fill="url(#gLow)"/>
<g clip-path="url(#cLow)">
<rect x="480" y="700" width="1230" height="320" fill="url(#gLow)"/>
<path d="M540,920 C700,870 900,880 1100,840 C1300,800 1450,790 1697,800 L1697,850 C1500,870 1300,900 1100,920 C900,950 700,950 540,970 Z" fill="#86a25c" opacity="0.5" filter="url(#tb8)"/>
<path d="M1350,910 C1450,870 1600,850 1697,870 L1697,960 C1600,940 1450,940 1350,910 Z" fill="#86a35d" opacity="0.45" filter="url(#tb8)"/>
<path d="M1185,745 C1230,770 1300,790 1400,780 C1300,800 1230,800 1185,745 Z" fill="#7d955a" opacity="0.4" filter="url(#tb8)"/>
<ellipse cx="1405" cy="768" rx="18" ry="7" fill="#4f5f34" opacity="0.8" filter="url(#tb2)"/>
<polygon points="492,1013.5 524.6,950 559.5,895.7 563.8,878 601,808.4 606.4,803 631.5,821.5 644.6,824.7 688,830 732,824.7 753.7,832.4 780,832.7 841,837.8 874.5,841 915,830 982.5,830 1050,819 1117.6,803 1131,781.4 1185,741 1201,754 1266,735.5 1320,727.4 1374,719 1430,730 1513,737 1697,756 1697,1004 1662,1005 1627,1003 1592,1008 1557,1006 1522,1006 1487,1004 1452,1003 1417,1003 1382,1003 1347,1006 1312,1007 1277,1005 1242,1003 1207,1004 1172,1007 1137,1007 1102,1005 1067,1005 1032,1004 997,1003 962,1005 927,1004 892,1003 870,1009 710,1008 653.3,1019 601,1009" fill="#fff" filter="url(#noise)" opacity="0.6" style="mix-blend-mode:overlay"/>
</g>
<polyline points="601,808.4 606.4,803 631.5,821.5 644.6,824.7 688,830 732,824.7 753.7,832.4 780,832.7 841,837.8 874.5,841 915,830 982.5,830 1050,819 1117.6,803 1131,781.4 1185,741 1201,754 1266,735.5 1320,727.4 1374,719 1430,730 1513,737 1697,756" fill="none" stroke="#d8f2a8" stroke-width="2.5" opacity="0.9"/>
</svg>



<!--WINUI-->
<svg class="abs" style="left:0;top:0" width="2388" height="1668" viewBox="0 0 2388 1668">
<!-- traffic pill -->
<rect x="297" y="107" width="80" height="42" rx="21" fill="#1a1a1a" stroke="#2e2e2e" stroke-width="2"/>
<circle cx="316.5" cy="128" r="6.2" fill="#e0685a"/>
<circle cx="337" cy="128" r="6.2" fill="#e6b955"/>
<circle cx="357.5" cy="128" r="6.2" fill="#76c25a"/>
<!-- toolbar pill -->
<rect x="519" y="93" width="724" height="86" rx="43" fill="#131313" stroke="#2c2c2c" stroke-width="2"/>
<path d="M549,114 L550,148 L557,140 L565,157 Q567,160 570,157 L571,155 L563,137 L573,137 Z" fill="#3d8ef5" stroke="#3d8ef5" stroke-width="2.5" stroke-linejoin="round"/>
<g fill="none" stroke="#a4a4a4" stroke-width="4" stroke-linecap="round" stroke-linejoin="round">
<path d="M665,115 L665,152 M650,137 L665,152 L680,137 M650,156 L681,156"/>
<path d="M752,115 L785,115 M768.5,119 L768.5,157 M754,134 L768.5,119.5 L783,134"/>
<path d="M858,143 L875.5,126 L893,143"/>
<path d="M966,128 L983.5,145 L1001,128"/>
<path d="M1074.5,131.5 L1074.5,141.5 M1082,122.5 L1082,149.5 M1089.3,114.5 L1089.3,157.5 M1096.5,126 L1096.5,147 M1103.8,119.5 L1103.8,153 M1111,130 L1111,142.5"/>
<path d="M1185,129 L1213,129 M1185,143 L1213,143"/>
</g>
<!-- right pill -->
<rect x="2007" y="93" width="208" height="86" rx="43" fill="#131313" stroke="#2c2c2c" stroke-width="2"/>
<g fill="none" stroke="#f2f2f2" stroke-width="4" stroke-linecap="round">
<rect x="2035" y="118" width="47" height="37" rx="8"/>
<path d="M2065.5,119 L2065.5,154" stroke-linecap="butt"/>
<path d="M2071,127 L2076.5,127 M2071,132.5 L2076.5,132.5 M2071,138.3 L2076.5,138.3" stroke-width="2.6"/>
<path d="M2156,120.5 L2186,151 M2186,120.5 L2156,151"/>
</g>
<!-- bottom-left controls -->
<g fill="none" stroke="#8a8a8a" stroke-width="3.2" stroke-linecap="round">
<path d="M300.6,1415 A21.2,21.2 0 0 1 313,1379"/>
<path d="M326,1383.5 A21.2,21.2 0 0 1 316,1418.5"/>
</g>
<polygon points="311,1373.5 321,1379.8 311.5,1386" fill="#8a8a8a"/>
<polygon points="306.5,1419.6 316,1413 316,1426" fill="#8a8a8a"/>
<g fill="none" stroke="#ffffff" stroke-width="3.1" stroke-linecap="round">
<circle cx="401.7" cy="1400.1" r="18.4"/>
<path d="M401.7,1375.5 L401.7,1391 M401.7,1409.5 L401.7,1425 M376.5,1400.1 L392.5,1400.1 M411,1400.1 L427,1400.1"/>
</g>
<!-- resize handle -->
<path d="M2218,1466 Q2255,1455 2259,1425" fill="none" stroke="#f0f0f0" stroke-width="6" stroke-linecap="round"/>
</svg>

<!--PANEL-->
<div id="panel">
<div class="abs" style="left:17px;top:16px;width:527px;height:63px;border-radius:32px;background:#d8d8d8"></div>
<div class="abs" style="left:20px;top:20px;width:168px;height:56px;border-radius:28px;background:#fff;box-shadow:0 1px 3px rgba(0,0,0,0.08)"></div>
<div class="abs seg" style="left:20px;width:168px;font-weight:bold">Edit</div>
<div class="abs seg" style="left:195px;width:168px">Light</div>
<div class="abs seg" style="left:372px;width:168px">Info</div>
<div class="abs" style="left:17px;top:94px;width:526px;height:63px;border-radius:32px;background:#d8d8d8"></div>
<div class="abs" style="left:20px;top:98px;width:66px;height:56px;border-radius:28px;background:#fff"></div>
<div class="abs" style="left:17px;top:172px;font-size:24px;color:#8b8b8b">Select</div>
<!-- heightmap -->
<svg class="abs" style="left:16px;top:217px;border-radius:20px" width="528" height="528" viewBox="1712 405 528 528">
<defs>
<clipPath id="hmc"><rect x="1712" y="405" width="528" height="528" rx="20"/></clipPath>
<filter id="hb20" x="-50%" y="-50%" width="200%" height="200%"><feGaussianBlur stdDeviation="20"/></filter>
<filter id="hb8" x="-50%" y="-50%" width="200%" height="200%"><feGaussianBlur stdDeviation="8"/></filter>
<filter id="hb3" x="-50%" y="-50%" width="200%" height="200%"><feGaussianBlur stdDeviation="2.5"/></filter>
<linearGradient id="hg" x1="0" y1="0" x2="0.3" y2="1"><stop offset="0" stop-color="#707070"/><stop offset="0.5" stop-color="#858585"/><stop offset="1" stop-color="#767676"/></linearGradient>
</defs>
<g clip-path="url(#hmc)">
<rect x="1712" y="405" width="528" height="528" fill="#777777"/>
<rect x="1700" y="395" width="120" height="560" fill="#6c6c6c" filter="url(#hb20)"/>
<path d="M1790,410 C1880,410 1980,430 2030,480 C2045,560 2040,640 1990,700 C1920,770 1830,790 1760,770 C1730,700 1740,520 1790,410 Z" fill="#8e8e8e" opacity="0.8" filter="url(#hb20)"/>

<path d="M1950,395 L2250,395 L2250,700 L2040,700 C2030,640 2030,560 2020,500 C2010,460 1990,430 1950,395 Z" fill="#2a2a2a" filter="url(#hb20)"/>
<path d="M2055,395 L2250,395 L2250,684 L2176,665 L2110,650 L2069,650 L2045,662 C2040,610 2042,540 2044,500 C2046,460 2050,430 2055,395 Z" fill="#000" filter="url(#hb8)"/>
<path d="M2075,420 L2250,420 L2250,670 L2080,640 C2060,600 2058,500 2075,420 Z" fill="#000"/>
<path d="M2058,455 C2068,490 2090,508 2125,512 C2145,515 2152,535 2140,548 C2120,555 2095,540 2080,525 C2065,505 2058,480 2058,455 Z" fill="#6e6e6e" opacity="0.85" filter="url(#hb8)"/>
<path d="M2043,662 L2069,650 L2110,650 L2176,665 L2250,692 L2250,945 L1700,945 L1700,805 C1740,822 1775,842 1812,843 C1850,842 1900,830 1935,812 C1975,770 2030,700 2043,662 Z" fill="#888888" filter="url(#hb3)"/>
<path d="M1953,795 C1980,740 2010,690 2034,674 C2060,655 2080,650 2095,653 C2125,658 2150,665 2156,674 C2150,700 2140,720 2145,745 C2155,760 2170,765 2168,775 C2160,787 2145,790 2136,787 C2110,783 2080,782 2055,783 C2020,785 1990,800 1973,803 Z" fill="#686868" filter="url(#hb3)"/>
<path d="M1960,805 C2040,790 2120,790 2240,780 L2240,945 L1700,945 L1700,880 C1800,860 1900,830 1960,805 Z" fill="#737373" filter="url(#hb20)"/>
<path d="M2045,665 C2070,650 2120,648 2170,662 C2180,690 2165,705 2140,712 C2100,715 2060,710 2040,700 Z" fill="#484848" opacity="0.8" filter="url(#hb8)"/>
<path d="M2160,660 C2200,680 2240,690 2240,700 L2240,800 C2210,780 2180,760 2170,720 Z" fill="#8e8e8e" opacity="0.8" filter="url(#hb8)"/>
<path d="M2044,654 L2071,648" stroke="#2e2e2e" stroke-width="10" stroke-linecap="round"/>
<path d="M1925,815 C1950,795 1975,765 2000,730 C2018,705 2032,680 2044,654" fill="none" stroke="#353535" stroke-width="10" stroke-linecap="round" filter="url(#hb3)"/>
<path d="M1712,800 C1740,815 1775,835 1812,836 C1850,834 1885,826 1925,815" fill="none" stroke="#333" stroke-width="22" stroke-linecap="round" filter="url(#hb3)"/>
</g>
</svg>
<!-- rotate icons -->
<svg class="abs" style="left:0;top:0" width="560" height="1256" viewBox="1696 188 560 1256">
<polygon points="1696,932 2005,932 2030,1012 1696,1012" fill="#eef0ea"/>
<polygon points="1990,932 2005,932 2030,1012 2010,1012" fill="#e9ebe6"/>
<g fill="none" stroke="#3a86f0" stroke-width="2.9" stroke-linejoin="round" stroke-linecap="round">
<rect x="1718.5" y="969.5" width="28.8" height="28.8" rx="3.5"/>
<path d="M1758,972.5 L1758,970 A10.8,10.8 0 0 0 1747.2,959.2 L1745,959.2"/>
<rect x="1796" y="969.5" width="28.8" height="28.8" rx="3.5"/>
<path d="M1785,972.5 L1785,970 A10.8,10.8 0 0 1 1795.8,959.2 L1798,959.2"/>
</g>
<polygon points="1740,959.2 1747.8,953.8 1747.8,964.6" fill="#3a86f0" stroke="#3a86f0" stroke-width="1" stroke-linejoin="round"/>
<polygon points="1803,959.2 1795.2,953.8 1795.2,964.6" fill="#3a86f0" stroke="#3a86f0" stroke-width="1" stroke-linejoin="round"/>
<g fill="none" stroke="#111" stroke-width="3.4" stroke-linecap="round" stroke-linejoin="round">
<path d="M1823,299 L1823,328 M1811,316 L1823,328 L1835,316 M1811,331 L1835,331"/>
<path d="M1886,299 L1911,299 M1898.5,302 L1898.5,331 M1887,314 L1898.5,302.5 L1910,314"/>
<path d="M1961,322 L1974.5,308 L1988,322"/>
<path d="M2035.5,308 L2049,322 L2062.5,308"/>
<path d="M2109.5,313 L2109.5,320 M2115,305 L2115,326 M2121,299 L2121,331 M2127,309.5 L2127,323 M2133,303 L2133,328 M2139,311 L2139,319"/>
<path d="M2189,309 L2210,309 M2189,320 L2210,320"/>
</g>
<path d="M1740,299 L1741,327 L1746.5,321 L1752,332 Q1753.5,334 1755.5,333 L1757,332 L1751.5,319.5 L1759,319 Z" fill="#000" stroke="#000" stroke-width="1.5" stroke-linejoin="round"/>
</svg>
<!-- sliders card -->
<div class="abs" style="left:16px;top:832px;width:528px;height:360px;border-radius:22px;background:#fff"></div>
<div class="abs slab" style="left:37px;top:871px">Width</div>
<div class="abs" style="left:164px;top:880px;width:240px;height:12px;border-radius:6px;background:#f0f0f0"></div>
<div class="abs" style="left:164px;top:880px;width:50px;height:12px;border-radius:6px;background:#a5caf5"></div>
<div class="abs" style="left:194px;top:862px;width:74px;height:48px;border-radius:24px;background:#fff;box-shadow:0 4px 14px rgba(0,0,0,0.07),0 0 2px rgba(0,0,0,0.04)"></div>
<div class="abs slab" style="left:372px;width:150px;text-align:right;top:871px">10</div>
<div class="abs slab" style="left:37px;top:955px">Fade</div>
<div class="abs" style="left:164px;top:964px;width:240px;height:12px;border-radius:6px;background:#f0f0f0"></div>
<div class="abs" style="left:164px;top:964px;width:44px;height:12px;border-radius:6px;background:#a5caf5"></div>
<div class="abs" style="left:188px;top:946px;width:74px;height:48px;border-radius:24px;background:#fff;box-shadow:0 4px 14px rgba(0,0,0,0.07),0 0 2px rgba(0,0,0,0.04)"></div>
<div class="abs slab" style="left:372px;width:150px;text-align:right;top:955px">3.0</div>
<div class="abs slab" style="left:37px;top:1039px">Scale</div>
<div class="abs" style="left:164px;top:1048px;width:240px;height:12px;border-radius:6px;background:#f0f0f0"></div>
<div class="abs" style="left:164px;top:1048px;width:63px;height:12px;border-radius:6px;background:#a5caf5"></div>
<div class="abs" style="left:207px;top:1030px;width:74px;height:48px;border-radius:24px;background:#fff;box-shadow:0 4px 14px rgba(0,0,0,0.07),0 0 2px rgba(0,0,0,0.04)"></div>
<div class="abs slab" style="left:372px;width:150px;text-align:right;top:1039px">5.0</div>
<div class="abs slab" style="left:37px;top:1123px">Height</div>
<div class="abs" style="left:164px;top:1132px;width:240px;height:12px;border-radius:6px;background:#f0f0f0"></div>
<div class="abs" style="left:164px;top:1132px;width:63px;height:12px;border-radius:6px;background:#a5caf5"></div>
<div class="abs" style="left:207px;top:1114px;width:74px;height:48px;border-radius:24px;background:#fff;box-shadow:0 4px 14px rgba(0,0,0,0.07),0 0 2px rgba(0,0,0,0.04)"></div>
<div class="abs slab" style="left:372px;width:150px;text-align:right;top:1123px">15.9</div>

</div>


<!--DOCK-->
<svg class="abs" style="left:0;top:0" width="2388" height="1668" viewBox="0 0 2388 1668">
<defs><filter id="db" filterUnits="userSpaceOnUse" x="0" y="1480" width="2388" height="190"><feGaussianBlur stdDeviation="10"/></filter><clipPath id="dockc"><rect x="30" y="1497" width="2328" height="154" rx="52"/></clipPath></defs>
<rect x="30" y="1497" width="2328" height="154" rx="52" fill="#4a4d4a" fill-opacity="0.85"/>
<g clip-path="url(#dockc)">
<rect x="30" y="1490" width="60" height="170" fill="#6a9a70" opacity="0.5" filter="url(#db)"/>
<rect x="213" y="1490" width="77" height="170" fill="#7ab070" opacity="0.5" filter="url(#db)"/>
<rect x="418" y="1490" width="52" height="170" fill="#8abf7a" opacity="0.5" filter="url(#db)"/>
<rect x="784" y="1490" width="131" height="170" fill="#70a070" opacity="0.35" filter="url(#db)"/>
<rect x="1019" y="1490" width="40" height="170" fill="#5b9b5c" opacity="0.45" filter="url(#db)"/>
<rect x="1439" y="1490" width="73" height="170" fill="#5a9a60" opacity="0.45" filter="url(#db)"/>
<rect x="1742" y="1490" width="58" height="170" fill="#4a8a50" opacity="0.45" filter="url(#db)"/>
<rect x="2320" y="1490" width="50" height="170" fill="#5a8a60" opacity="0.5" filter="url(#db)"/>
</g>
<rect x="30" y="1497" width="2328" height="154" rx="52" fill="none" stroke="#b0d8a8" stroke-opacity="0.6" stroke-width="2.5"/>
<defs>
<linearGradient id="igMail" x1="0" y1="0" x2="0" y2="1"><stop offset="0" stop-color="#5fb2fa"/><stop offset="1" stop-color="#1f6fe8"/></linearGradient>
<linearGradient id="igApp" x1="0" y1="0" x2="0" y2="1"><stop offset="0" stop-color="#52b4fb"/><stop offset="1" stop-color="#1c6ef0"/></linearGradient>
<linearGradient id="igSat" x1="0" y1="0" x2="0" y2="1"><stop offset="0" stop-color="#3a8cf2"/><stop offset="1" stop-color="#1a62e0"/></linearGradient>
<linearGradient id="igMsg" x1="0" y1="0" x2="0" y2="1"><stop offset="0" stop-color="#86e57a"/><stop offset="1" stop-color="#4fbf4a"/></linearGradient>
<linearGradient id="igMusic" x1="0" y1="0" x2="0" y2="1"><stop offset="0" stop-color="#f25a78"/><stop offset="1" stop-color="#e8283c"/></linearGradient>
<linearGradient id="igOver" x1="0" y1="0" x2="0" y2="1"><stop offset="0" stop-color="#f6a23a"/><stop offset="1" stop-color="#ee6a22"/></linearGradient>
<linearGradient id="igSet" x1="0" y1="0" x2="0" y2="1"><stop offset="0" stop-color="#a2a2a8"/><stop offset="1" stop-color="#6e6e74"/></linearGradient>
<linearGradient id="igFolder" x1="0" y1="0" x2="0" y2="1"><stop offset="0" stop-color="#62b6fa"/><stop offset="1" stop-color="#3c8ef0"/></linearGradient>
<linearGradient id="igHome" x1="0" y1="0" x2="0" y2="1"><stop offset="0" stop-color="#fbbf3a"/><stop offset="1" stop-color="#f49a20"/></linearGradient>
<linearGradient id="igWhite" x1="0" y1="0" x2="0" y2="1"><stop offset="0" stop-color="#ffffff"/><stop offset="1" stop-color="#e9e9ec"/></linearGradient>
</defs>
<g transform="translate(56.4,1524.5) scale(0.9900)"><rect width="100" height="100" rx="23" fill="#f7f7f8"/><path d="M17,25 Q17,20 22,20 L40,20 L45,26 L80,26 Q84,26 84,30 L84,78 Q84,82 80,82 L21,82 Q17,82 17,78 Z" fill="#3a90ee"/><rect x="22" y="30" width="60" height="4" fill="#eaf4ff"/><path d="M17,36 L84,36 L84,78 Q84,82 80,82 L21,82 Q17,82 17,78 Z" fill="url(#igFolder)"/></g>
<g transform="translate(184.4,1524.5) scale(0.9900)"><rect width="100" height="100" rx="23" fill="#f7f7f8"/><path d="M50,16 L12,46 L19,46 L19,82 L81,82 L81,46 L88,46 L75,36 L75,22 L70,22 L70,32 Z" fill="url(#igHome)"/><path d="M50,30 L28,48 L28,74 L72,74 L72,48 Z" fill="#f8bb45"/><path d="M50,46 L40,54 L40,66 L60,66 L60,54 Z" fill="#fde49a"/></g>
<g transform="translate(312.4,1524.5) scale(0.9900)"><rect width="100" height="100" rx="23" fill="#c9cfdc"/><circle cx="50" cy="50" r="42" fill="#f2f3f7"/><circle cx="50" cy="50" r="36" fill="#1a5ee8"/><circle cx="50" cy="50" r="28" fill="#eef0f7"/><path d="M45,30 Q45,28 47,28 L53,28 Q55,28 55,30 L55,48 L51,52 L55,56 L55,72 Q55,74 53,74 L47,74 Q45,74 45,72 Z" fill="#15172a"/></g>
<g transform="translate(440.4,1524.5) scale(0.9900)"><rect width="100" height="100" rx="23" fill="url(#igMsg)"/><ellipse cx="50" cy="47" rx="37" ry="30" fill="#eaf8e8"/><path d="M22,62 L16,80 L36,70 Z" fill="#eaf8e8"/></g>
<g transform="translate(568.4,1524.5) scale(0.9900)"><rect width="100" height="100" rx="23" fill="#5865f2"/><path d="M22,34 Q34,24 40,25 L43,30 Q50,29 57,30 L60,25 Q66,24 78,34 Q86,52 84,70 Q76,77 66,80 L62,73 Q66,71 70,68 L67,66 Q50,74 33,66 L30,68 Q34,71 38,73 L34,80 Q24,77 16,70 Q14,52 22,34 Z" fill="#eef0ff"/><ellipse cx="38" cy="53" rx="6.5" ry="7" fill="#5865f2"/><ellipse cx="62" cy="53" rx="6.5" ry="7" fill="#5865f2"/></g>
<g transform="translate(696.4,1524.5) scale(0.9900)"><rect width="100" height="100" rx="23" fill="url(#igMail)"/><rect x="14" y="28" width="72" height="46" rx="5" fill="#e6efff"/><path d="M14,31 L50,58 L86,31" fill="none" stroke="#b9cff5" stroke-width="3"/></g>
<g transform="translate(824.4,1524.5) scale(0.9900)"><rect width="100" height="100" rx="23" fill="#f7f7f8"/><circle cx="50" cy="50" r="40" fill="#2a7de8"/><circle cx="50" cy="50" r="34" fill="none" stroke="#cfe3ff" stroke-width="3" stroke-dasharray="1.5 3"/><path d="M72,28 L54,54 L46,46 Z" fill="#ff3b30"/><path d="M28,72 L46,46 L54,54 Z" fill="#fff"/></g>
<g transform="translate(952.4,1524.5) scale(0.9900)"><rect width="100" height="100" rx="23" fill="#f7f7f8"/><g fill="none" stroke="#111" stroke-width="5"><path d="M50,22 L38,29 L38,52" transform="rotate(0 50 50)" stroke-linejoin="round" stroke-linecap="round"/><path d="M50,14 Q40,14 32,20 L28,24 Q24,30 24,38 L24,55" transform="rotate(0 50 50)" stroke-linecap="round"/><path d="M50,22 L38,29 L38,52" transform="rotate(60 50 50)" stroke-linejoin="round" stroke-linecap="round"/><path d="M50,14 Q40,14 32,20 L28,24 Q24,30 24,38 L24,55" transform="rotate(60 50 50)" stroke-linecap="round"/><path d="M50,22 L38,29 L38,52" transform="rotate(120 50 50)" stroke-linejoin="round" stroke-linecap="round"/><path d="M50,14 Q40,14 32,20 L28,24 Q24,30 24,38 L24,55" transform="rotate(120 50 50)" stroke-linecap="round"/><path d="M50,22 L38,29 L38,52" transform="rotate(180 50 50)" stroke-linejoin="round" stroke-linecap="round"/><path d="M50,14 Q40,14 32,20 L28,24 Q24,30 24,38 L24,55" transform="rotate(180 50 50)" stroke-linecap="round"/><path d="M50,22 L38,29 L38,52" transform="rotate(240 50 50)" stroke-linejoin="round" stroke-linecap="round"/><path d="M50,14 Q40,14 32,20 L28,24 Q24,30 24,38 L24,55" transform="rotate(240 50 50)" stroke-linecap="round"/><path d="M50,22 L38,29 L38,52" transform="rotate(300 50 50)" stroke-linejoin="round" stroke-linecap="round"/><path d="M50,14 Q40,14 32,20 L28,24 Q24,30 24,38 L24,55" transform="rotate(300 50 50)" stroke-linecap="round"/></g></g>
<g transform="translate(1080.4,1524.5) scale(0.9900)"><rect width="100" height="100" rx="23" fill="#d4754f"/><g stroke="#fbf1e8" stroke-width="5" stroke-linecap="round"><line x1="50" y1="50" x2="86.0" y2="50.0"/><line x1="50" y1="50" x2="74.0" y2="68.1"/><line x1="50" y1="50" x2="68.0" y2="81.2"/><line x1="50" y1="50" x2="46.3" y2="79.8"/><line x1="50" y1="50" x2="32.0" y2="81.2"/><line x1="50" y1="50" x2="22.4" y2="61.7"/><line x1="50" y1="50" x2="14.0" y2="50.0"/><line x1="50" y1="50" x2="26.0" y2="31.9"/><line x1="50" y1="50" x2="32.0" y2="18.8"/><line x1="50" y1="50" x2="53.7" y2="20.2"/><line x1="50" y1="50" x2="68.0" y2="18.8"/><line x1="50" y1="50" x2="77.6" y2="38.3"/></g></g>
<g transform="translate(1208.4,1524.5) scale(0.9900)"><rect width="100" height="100" rx="23" fill="#f5f5f5"/><path d="M0,23 Q0,0 23,0 L77,0 Q100,0 100,23 L100,27 L0,27 Z" fill="#f9d54a"/><path d="M12,50 L88,50 M12,75 L88,75" stroke="#bdbdbd" stroke-width="2"/></g>
<g transform="translate(1336.4,1524.5) scale(0.9900)"><rect width="100" height="100" rx="23" fill="#fbfbfb"/><text x="50" y="30" text-anchor="middle" font-family="Liberation Sans" font-size="19" fill="#e8382f">Thu</text><text x="50" y="86" text-anchor="middle" font-family="Liberation Sans" font-size="56" fill="#222">9</text></g>
<g transform="translate(1464.4,1524.5) scale(0.9900)"><rect width="100" height="100" rx="23" fill="#f8f8f8"/><circle cx="20" cy="25" r="6" fill="#2f6ff0"/><circle cx="20" cy="50" r="6" fill="#e8453c"/><circle cx="20" cy="75" r="6" fill="#f09a37"/><path d="M38,25 L88,25 M38,50 L88,50 M38,75 L88,75" stroke="#c4c4c4" stroke-width="2"/></g>
<g transform="translate(1592.4,1524.5) scale(0.9900)"><rect width="100" height="100" rx="23" fill="#f3f1e8"/><path d="M60,0 L77,0 Q100,0 100,23 L100,60 L70,45 Z" fill="#6bd36a"/><path d="M0,60 L30,72 L18,100 L23,100 Q0,100 0,77 Z" fill="#f07ac0"/><path d="M60,100 L100,80 L100,77 Q100,100 77,100 Z" fill="#f5d34a"/><rect x="38" y="0" width="14" height="60" fill="#3b8df0"/><circle cx="38" cy="60" r="24" fill="#fff"/><circle cx="38" cy="60" r="19" fill="#3b8df0"/><path d="M38,47 L47,70 L38,65 L29,70 Z" fill="#fff"/></g>
<g transform="translate(1720.4,1524.5) scale(0.9900)"><rect width="100" height="100" rx="23" fill="url(#igMusic)"/><path d="M40,28 L72,20 L72,66" fill="none" stroke="#fbd9df" stroke-width="7"/><path d="M40,28 L40,74" stroke="#fbd9df" stroke-width="7"/><ellipse cx="32" cy="76" rx="10" ry="8" fill="#fbd9df"/><ellipse cx="64" cy="68" rx="10" ry="8" fill="#fbd9df"/></g>
<g transform="translate(1848.4,1524.5) scale(0.9900)"><rect width="100" height="100" rx="23" fill="url(#igOver)"/><circle cx="50" cy="50" r="40" fill="#fbeee0" stroke="#2a1a10" stroke-width="4"/><path d="M32,36 Q24,50 32,64 M68,36 Q76,50 68,64 M39,42 Q35,50 39,58 M61,42 Q65,50 61,58" fill="none" stroke="#f28a2a" stroke-width="4"/><path d="M50,48 L40,88 M50,48 L60,88 M44,70 L56,70" stroke="#2a1a10" stroke-width="3.5"/><circle cx="50" cy="48" r="6" fill="#2a1a10"/></g>
<g transform="translate(1976.4,1524.5) scale(0.9900)"><rect width="100" height="100" rx="23" fill="url(#igSat)"/><rect x="14" y="30" width="24" height="17" rx="2" transform="rotate(35 26 38.5)" fill="#f6cf45"/><rect x="54" y="68" width="24" height="17" rx="2" transform="rotate(35 66 76.5)" fill="#f6cf45"/><rect x="28" y="47" width="40" height="16" rx="2" transform="rotate(-45 48 55)" fill="#f4f6fb"/><path d="M52,22 Q72,26 80,46 Q66,48 58,40 Q52,32 52,22 Z" fill="#f4f6fb"/><circle cx="73" cy="24" r="4.5" fill="#f4f6fb"/></g>
<g transform="translate(2104.4,1524.5) scale(0.9900)"><rect width="100" height="100" rx="23" fill="url(#igApp)"/><g stroke="#d9ecff" stroke-width="7" stroke-linecap="round"><path d="M52,22 L28,76"/><path d="M48,22 L72,76"/><path d="M18,60 L82,60"/></g></g>
<g transform="translate(2232.4,1524.5) scale(0.9900)"><rect width="100" height="100" rx="23" fill="url(#igSet)"/><circle cx="50" cy="50" r="38" fill="none" stroke="#d8d8dc" stroke-width="6" stroke-dasharray="4 3"/><circle cx="50" cy="50" r="32" fill="#d0d0d4"/><circle cx="50" cy="50" r="26" fill="#8e8e93"/><g stroke="#d8d8dc" stroke-width="6"><line x1="50" y1="50" x2="50" y2="24"/><line x1="50" y1="50" x2="72.5" y2="63"/><line x1="50" y1="50" x2="27.5" y2="63"/></g><circle cx="50" cy="50" r="7" fill="#d8d8dc"/></g>
<circle cx="793" cy="1527.5" r="19" fill="#e9423a"/><text x="793" y="1537" text-anchor="middle" font-family="Liberation Sans" font-size="26" fill="#fff">1</text>
<circle cx="1560.7" cy="1526.5" r="19" fill="#e9423a"/><text x="1560.7" y="1536" text-anchor="middle" font-family="Liberation Sans" font-size="26" fill="#fff">3</text>
</svg>

</body></html>
